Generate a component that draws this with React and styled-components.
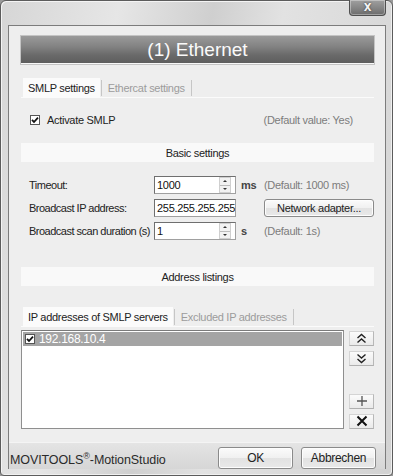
import React from 'react';
import styled, { createGlobalStyle, css } from 'styled-components';

const GlobalStyle = createGlobalStyle`
  html, body {
    margin: 0;
    padding: 0;
    background: #9a9a9a;
  }
  body {
    font-family: "Liberation Sans", Arial, sans-serif;
    font-size: 11px;
    letter-spacing: -0.3px;
    color: #222;
  }
`;

const Window = styled.div`
  width: 393px;
  height: 476px;
  box-sizing: border-box;
  display: flex;
  flex-direction: column;
  padding: 0 6px 6px 7px;
  border: 1px solid #5c5c5c;
  border-radius: 6px 6px 4px 4px;
  background: linear-gradient(100deg, #d6d6d6 0%, #e6e6e6 25%, #cfcfcf 45%, #e2e2e2 60%, #d2d2d2 100%);
  box-shadow: inset 1px 1px 0 #f4f4f4, inset -1px -1px 0 #f0f0f0;
`;

const TitleBar = styled.div`
  height: 24px;
  display: flex;
  justify-content: flex-end;
  align-items: flex-start;
`;

const CloseButton = styled.div`
  width: 37px;
  height: 16px;
  margin-top: -1px;
  box-sizing: border-box;
  display: flex;
  align-items: center;
  justify-content: center;
  border: 1px solid #4f4f4f;
  border-top: none;
  border-radius: 0 0 4px 4px;
  background: linear-gradient(#a0a0a0, #878787 50%, #6c6c6c);
  box-shadow: inset 0 0 0 1px rgba(255, 255, 255, 0.35);
  color: #f4f4f4;
  font-family: "DejaVu Sans", sans-serif;
  font-size: 10px;
  font-weight: bold;
  text-shadow: 0 0 2px #333;
`;

const Client = styled.div`
  flex: 1;
  display: flex;
  flex-direction: column;
  border: 1px solid #7c7c7c;
  background: #eeeeee;
  min-height: 0;
`;

const Body = styled.div`
  flex: 1;
  display: flex;
  flex-direction: column;
  padding: 10px 11px 0 12px;
`;

const Header = styled.div`
  height: 27px;
  display: flex;
  align-items: center;
  justify-content: center;
  border-bottom: 1px solid #f8f8f8;
  box-shadow: 0 0 0 1px #c4c4c4;
  background: linear-gradient(#9a9a9a 0%, #828282 40%, #6a6a6a 70%, #5e5e5e 100%);
  color: #fafafa;
  font-size: 19px;
  letter-spacing: 0;
`;

const TabStrip = styled.div`
  display: flex;
  height: 19px;
  margin-top: ${({ $top }) => $top}px;
  padding-left: 2px;
  border-bottom: 1px solid #fbfbfb;
`;

const Tab = styled.div`
  display: flex;
  align-items: center;
  padding: 0 5px;
  margin-right: 3px;
  position: relative;
  color: ${({ $active }) => ($active ? '#222' : '#9c9c9c')};
  background: ${({ $active }) => ($active ? '#fbfbfb' : 'transparent')};

  &::after {
    content: '';
    position: absolute;
    right: -2px;
    top: 2px;
    bottom: 1px;
    width: 1px;
    background: #c6c6c6;
  }
`;

const CheckRow = styled.div`
  display: flex;
  align-items: center;
  justify-content: space-between;
  height: 14px;
  margin: 15px 21px 0 9px;
`;

const CheckLabel = styled.label`
  display: flex;
  align-items: center;
  gap: 7px;
`;

const Hint = styled.span`
  color: #7c7c7c;
  white-space: nowrap;
`;

const Band = styled.div`
  height: 19px;
  margin-top: ${({ $top }) => $top}px;
  display: flex;
  align-items: center;
  justify-content: center;
  background: #f9f9f9;
`;

const FormGrid = styled.div`
  display: grid;
  grid-template-columns: 125px 82px 28px 1fr;
  grid-auto-rows: 18px;
  row-gap: 5px;
  align-items: center;
  margin: 14px 0 0 8px;
`;

const FieldLabel = styled.span`
  white-space: nowrap;
  letter-spacing: -0.5px;
`;

const Unit = styled.span`
  padding-left: 5px;
  font-weight: ${({ $bold }) => ($bold ? 'bold' : 'normal')};
  color: #444;
`;

const InputBox = styled.div`
  height: 18px;
  box-sizing: border-box;
  display: flex;
  align-items: center;
  border: 1px solid #a0a0a0;
  border-top-color: #6f6f6f;
  border-left-color: #6f6f6f;
  background: #fff;
  padding-left: 2px;
  overflow: hidden;
`;

const InputText = styled.span`
  flex: 1;
  font-size: 11px;
  letter-spacing: -0.3px;
  color: #111;
  white-space: nowrap;
`;

const Spinner = styled.div`
  width: 10px;
  height: 14px;
  margin-right: 4px;
  display: flex;
  flex-direction: column;
  border: 1px solid #cfcfcf;
  background: #f2f2f2;
`;

const SpinHalf = styled.div`
  flex: 1;
  display: flex;
  align-items: center;
  justify-content: center;
  ${({ $down }) => !$down && css`border-bottom: 1px solid #bdbdbd;`}

  &::before {
    content: '';
    border-left: 2px solid transparent;
    border-right: 2px solid transparent;
    ${({ $down }) => ($down
    ? css`border-top: 2px solid #333;`
    : css`border-bottom: 2px solid #333;`)}
  }
`;

const PushButton = styled.div`
  height: ${({ $h }) => $h || 18}px;
  width: ${({ $w }) => $w}px;
  box-sizing: border-box;
  display: flex;
  align-items: center;
  justify-content: center;
  border: 1px solid #8a8a8a;
  border-radius: 3px;
  background: linear-gradient(#fbfbfb 0%, #f0f0f0 50%, #e2e2e2 51%, #e9e9e9 100%);
  box-shadow: inset 0 0 0 1px #fdfdfd;
  color: #222;
  font-size: ${({ $fs }) => $fs || 11}px;
  white-space: nowrap;
`;

const ListArea = styled.div`
  display: flex;
  gap: 5px;
  margin-top: 3px;
  height: 99px;
`;

const ListBox = styled.div`
  width: 323px;
  box-sizing: border-box;
  border: 1px solid #8f8f8f;
  border-top-color: #7a7a7a;
  background: #fff;
  padding: 1px;
`;

const ListRow = styled.div`
  height: 14px;
  display: flex;
  align-items: center;
  gap: 4px;
  padding-left: 2px;
  background: ${({ $selected }) => ($selected ? '#a4a4a4' : 'transparent')};
  color: ${({ $selected }) => ($selected ? '#fff' : '#222')};
  font-size: 12px;
  letter-spacing: -0.3px;
`;

const SideButtons = styled.div`
  display: flex;
  flex-direction: column;
  gap: 5px;
  padding-top: 1px;
`;

const SideSpacer = styled.div`
  height: 19px;
`;

const ToolButton = styled.div`
  width: 25px;
  height: 16px;
  box-sizing: border-box;
  display: flex;
  align-items: center;
  justify-content: center;
  border: 1px solid #d4d4d4;
  border-right-color: #b8b8b8;
  border-bottom-color: #b0b0b0;
  background: linear-gradient(#fbfbfb, #eaeaea);
`;

const Footer = styled.div`
  height: 29px;
  display: flex;
  align-items: flex-start;
  justify-content: space-between;
  margin-top: 13px;
  padding: 4px 9px 0 1px;
  border-top: 1px solid #f4f4f4;
  background: linear-gradient(#e4e4e4, #d6d6d6);
`;

const StatusText = styled.span`
  align-self: flex-end;
  margin-bottom: 2px;
  font-size: 12.5px;
  letter-spacing: -0.1px;
  color: #2a2a2a;

  sup {
    font-size: 9px;
    letter-spacing: 0;
  }
`;

const DialogButtons = styled.div`
  display: flex;
  gap: 8px;
`;

const CheckGlyph = ({ size = 10, mark = '#111', box = '#fff' }) => (
  <svg width={size} height={size} viewBox="0 0 10 10">
    <rect x="0.5" y="0.5" width="9" height="9" fill={box} stroke="#555" />
    <path d="M2 4.8 L4 7 L8 2.6" fill="none" stroke={mark} strokeWidth="1.8" />
  </svg>
);

const DoubleChevron = ({ down }) => (
  <svg width="11" height="11" viewBox="0 0 11 11">
    <g transform={down ? 'rotate(180 5.5 5.5)' : undefined} fill="none" stroke="#222" strokeWidth="1.4">
      <path d="M1.5 5 L5.5 1.5 L9.5 5" />
      <path d="M1.5 9.5 L5.5 6 L9.5 9.5" />
    </g>
  </svg>
);

const PlusIcon = () => (
  <svg width="12" height="12" viewBox="0 0 12 12">
    <path d="M6 1 V11 M1 6 H11" stroke="#555" strokeWidth="1.3" />
  </svg>
);

const CrossIcon = () => (
  <svg width="12" height="12" viewBox="0 0 12 12">
    <path d="M1.5 1.5 L10.5 10.5 M10.5 1.5 L1.5 10.5" stroke="#111" strokeWidth="2" />
  </svg>
);

const SpinInput = ({ value }) => (
  <InputBox>
    <InputText>{value}</InputText>
    <Spinner>
      <SpinHalf />
      <SpinHalf $down />
    </Spinner>
  </InputBox>
);

const App = () => (
  <>
    <GlobalStyle />
    <Window>
      <TitleBar>
        <CloseButton>X</CloseButton>
      </TitleBar>
      <Client>
        <Body>
          <Header>(1) Ethernet</Header>

          <TabStrip $top={14}>
            <Tab $active>SMLP settings</Tab>
            <Tab>Ethercat settings</Tab>
          </TabStrip>

          <CheckRow>
            <CheckLabel>
              <CheckGlyph />
              Activate SMLP
            </CheckLabel>
            <Hint>(Default value: Yes)</Hint>
          </CheckRow>

          <Band $top={16}>Basic settings</Band>

          <FormGrid>
            <FieldLabel>Timeout:</FieldLabel>
            <SpinInput value="1000" />
            <Unit $bold>ms</Unit>
            <Hint>(Default: 1000 ms)</Hint>

            <FieldLabel>Broadcast IP address:</FieldLabel>
            <InputBox>
              <InputText>255.255.255.255</InputText>
            </InputBox>
            <span />
            <PushButton $w={110}>Network adapter...</PushButton>

            <FieldLabel>Broadcast scan duration (s)</FieldLabel>
            <SpinInput value="1" />
            <Unit $bold>s</Unit>
            <Hint>(Default: 1s)</Hint>
          </FormGrid>

          <Band $top={27}>Address listings</Band>

          <TabStrip $top={21}>
            <Tab $active>IP addresses of SMLP servers</Tab>
            <Tab>Excluded IP addresses</Tab>
          </TabStrip>

          <ListArea>
            <ListBox>
              <ListRow $selected>
                <CheckGlyph size={10} />
                192.168.10.4
              </ListRow>
            </ListBox>
            <SideButtons>
              <ToolButton><DoubleChevron /></ToolButton>
              <ToolButton><DoubleChevron down /></ToolButton>
              <SideSpacer />
              <ToolButton><PlusIcon /></ToolButton>
              <ToolButton><CrossIcon /></ToolButton>
            </SideButtons>
          </ListArea>
        </Body>

        <Footer>
          <StatusText>
            MOVITOOLS<sup>®</sup>-MotionStudio
          </StatusText>
          <DialogButtons>
            <PushButton $w={75} $h={22} $fs={12}>OK</PushButton>
            <PushButton $w={75} $h={22} $fs={12}>Abbrechen</PushButton>
          </DialogButtons>
        </Footer>
      </Client>
    </Window>
  </>
);

export default App;
